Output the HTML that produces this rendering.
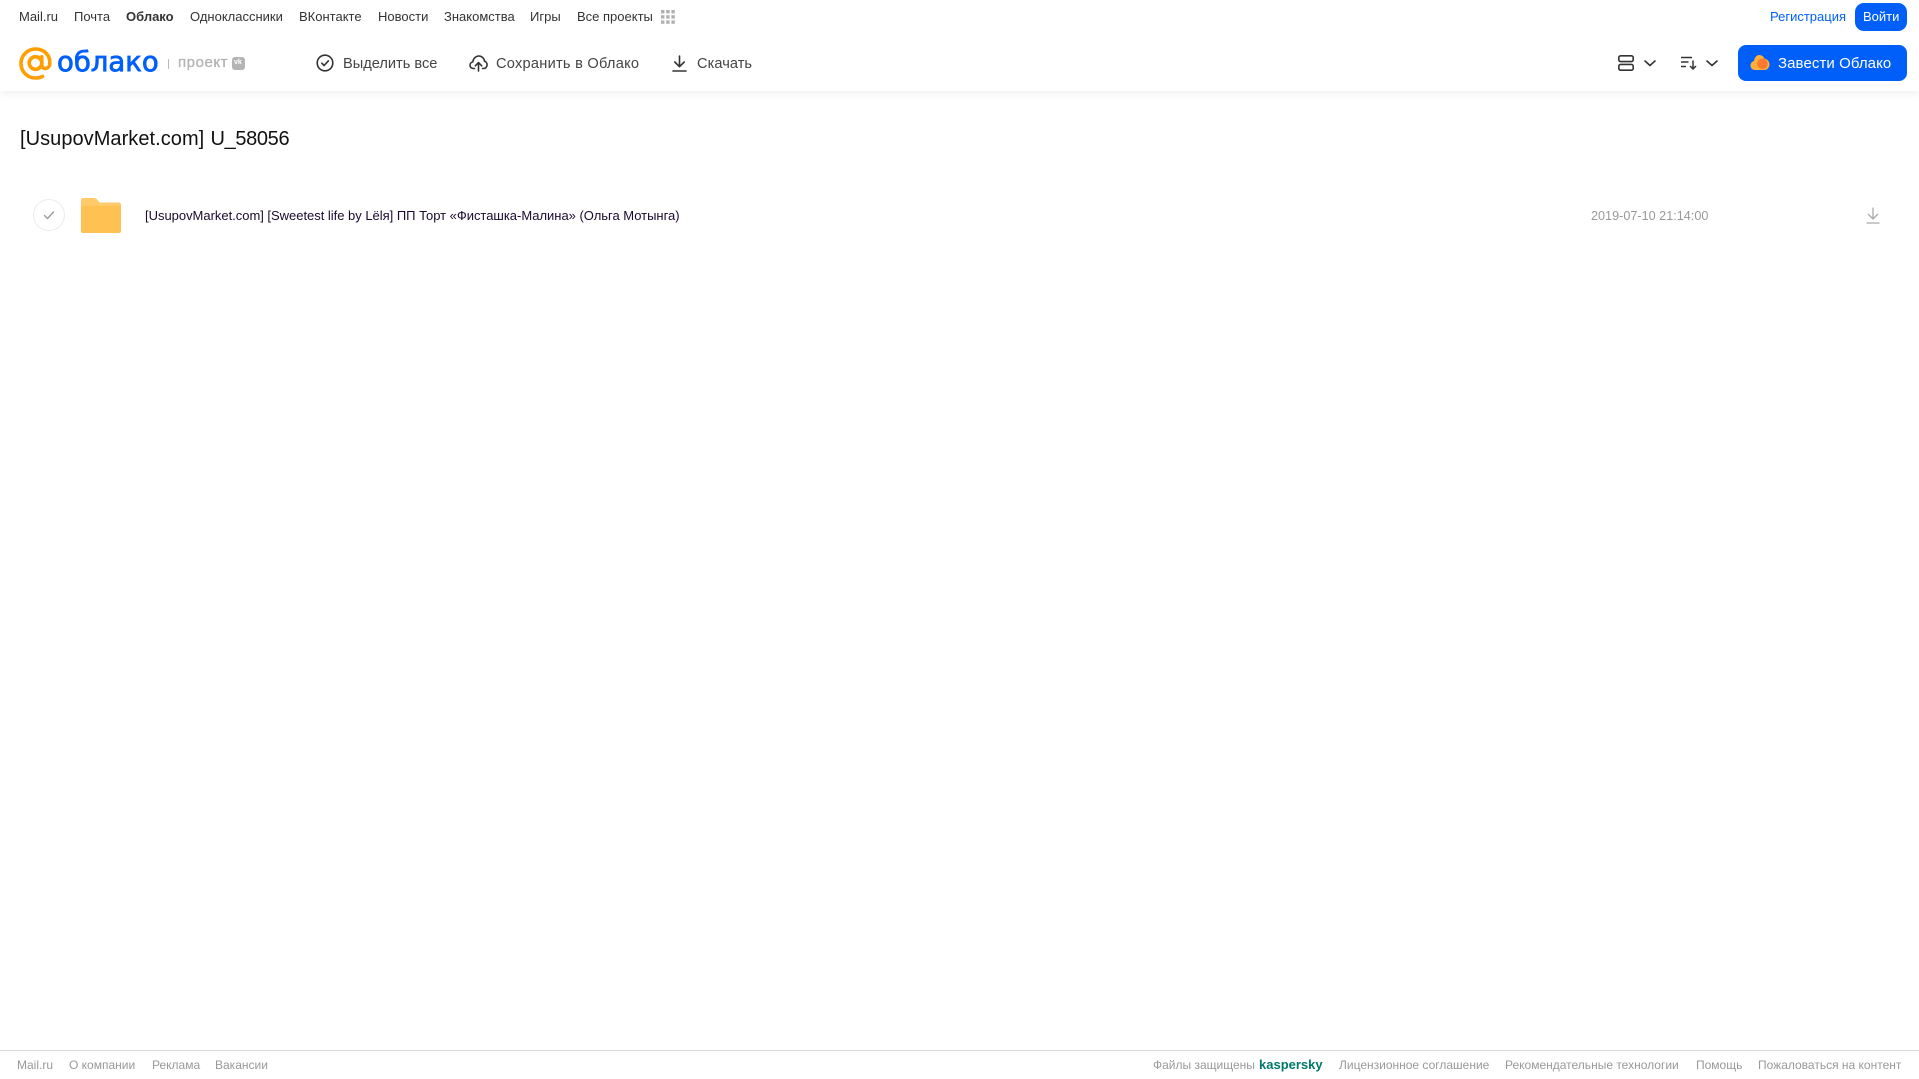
<!DOCTYPE html>
<html lang="ru">
<head>
<meta charset="utf-8">
<title>Облако</title>
<style>
html,body{margin:0;padding:0;background:#fff;width:1919px;height:1079px;overflow:hidden;font-family:"Liberation Sans",sans-serif}
.t{position:absolute;white-space:nowrap;line-height:20px;height:20px}
.n{font-size:13px;color:#333;top:7px}
.a{font-size:14.6px;color:#444;top:54px}
.f{font-size:12px;color:#999;top:1055px}
svg{position:absolute;overflow:visible}
#hd{position:absolute;left:0;top:0;width:1919px;height:91px;background:#fff;box-shadow:0 2px 8px rgba(0,0,0,.07)}
</style>
</head>
<body>
<div id="hd"></div>

<span class="t n" style="left:19px">Mail.ru</span>
<span class="t n" style="left:74px">Почта</span>
<span class="t n" style="left:126px;font-weight:bold">Облако</span>
<span class="t n" style="left:190px">Одноклассники</span>
<span class="t n" style="left:299px">ВКонтакте</span>
<span class="t n" style="left:378px">Новости</span>
<span class="t n" style="left:444px">Знакомства</span>
<span class="t n" style="left:530px">Игры</span>
<span class="t n" style="left:577px">Все проекты</span>
<svg style="left:661px;top:10px" width="14" height="14" fill="#b0b0b0"><rect x="0" y="0" width="3.4" height="3.4"/><rect x="5.2" y="0" width="3.4" height="3.4"/><rect x="10.4" y="0" width="3.4" height="3.4"/><rect x="0" y="5.2" width="3.4" height="3.4"/><rect x="5.2" y="5.2" width="3.4" height="3.4"/><rect x="10.4" y="5.2" width="3.4" height="3.4"/><rect x="0" y="10.4" width="3.4" height="3.4"/><rect x="5.2" y="10.4" width="3.4" height="3.4"/><rect x="10.4" y="10.4" width="3.4" height="3.4"/></svg>

<span class="t" style="left:1770px;top:7px;font-size:13px;color:#005ff9">Регистрация</span>
<div style="position:absolute;left:1855px;top:3px;width:52px;height:28px;border-radius:9px;background:#005ff9"></div>
<span class="t" style="left:1863px;top:7px;font-size:13px;color:#fff">Войти</span>

<svg style="left:19px;top:47px" width="33" height="33" viewBox="0 0 33 33" fill="none" stroke="#ff9e00" stroke-width="3.6"><circle cx="16.5" cy="16" r="6.3"/><path d="M22.8 9.8V18c0 5 7.6 5 8-1.5C31.2 8 25 2 16.5 2 8.5 2 2 8.500 2 16.500 2 24.800 8.500 31 16.500 31c2.800 0 5-.5 7-1.600" stroke-linecap="round"/></svg>
<span class="t" style="left:57px;top:44px;height:36px;line-height:36px;font-size:27.5px;color:#005ff9;font-family:'DejaVu Sans',sans-serif;-webkit-text-stroke:.8px #005ff9">облако</span>
<div style="position:absolute;left:168px;top:59px;width:1px;height:10px;background:#bbb"></div>
<span class="t" style="left:178px;top:53px;font-size:15px;color:#b4b4b4;letter-spacing:.55px;-webkit-text-stroke:.35px #b4b4b4">проект</span>
<div style="position:absolute;left:232px;top:57px;width:13px;height:13px;border-radius:3px;background:#b4b4b4"></div>
<span class="t" style="left:234px;top:53px;font-size:7px;font-weight:bold;color:#fff">vk</span>

<svg style="left:316px;top:54px" width="18" height="18" viewBox="0 0 18 18" fill="none" stroke="#333" stroke-width="1.600"><circle cx="9" cy="9" r="7.800"/><path d="M5.800 9.200l2.300 2.300 4.200-4.600" stroke-linecap="round" stroke-linejoin="round"/></svg>
<span class="t a" style="left:343px">Выделить все</span>
<svg style="left:469px;top:54px" width="19" height="18" viewBox="0 0 19 18" fill="none" stroke="#333" stroke-width="1.600" stroke-linecap="round" stroke-linejoin="round"><path d="M5.500 14.500H4.500C2.500 14.500 1 13 1 11.200c0-1.700 1.200-3 2.800-3.300C4.200 4.500 6.800 2 9.800 2c3 0 5.400 2.300 5.800 5.300 1.500.3 2.500 1.800 2.500 3.500 0 2-1.500 3.700-3.500 3.700h-1"/><path d="M9.500 17V9M6.300 11.800L9.500 8.600l3.200 3.200"/></svg>
<span class="t a" style="left:496px;letter-spacing:.25px">Сохранить в Облако</span>
<svg style="left:672px;top:55px" width="15" height="17" viewBox="0 0 15 17" fill="none" stroke="#333" stroke-width="1.600" stroke-linecap="round" stroke-linejoin="round"><path d="M7.500 1v10.500M2.800 7l4.700 4.700L12.200 7M1 16h13"/></svg>
<span class="t a" style="left:697px;letter-spacing:.05px">Скачать</span>

<svg style="left:1618px;top:55px" width="16" height="16" viewBox="0 0 16 16" fill="none" stroke="#333" stroke-width="1.600"><rect x=".8" y=".8" width="14.400" height="5.800" rx="1.800"/><rect x=".8" y="9.400" width="14.400" height="5.800" rx="1.800"/></svg>
<svg style="left:1644px;top:60px" width="12" height="7" viewBox="0 0 12 7" fill="none" stroke="#333" stroke-width="1.600" stroke-linecap="round" stroke-linejoin="round"><path d="M1 1l5 4.500L11 1"/></svg>
<svg style="left:1681px;top:56px" width="16" height="14" viewBox="0 0 16 14" fill="none" stroke="#333" stroke-width="1.400"><path d="M0 1.500h11M0 6h7.500M0 10.500h5"/><path d="M12 4.500V13M9 10l3 3 3-3" stroke-width="1.500"/></svg>
<svg style="left:1706px;top:60px" width="12" height="7" viewBox="0 0 12 7" fill="none" stroke="#333" stroke-width="1.600" stroke-linecap="round" stroke-linejoin="round"><path d="M1 1l5 4.500L11 1"/></svg>

<div style="position:absolute;left:1738px;top:45px;width:169px;height:36px;border-radius:8px;background:#005ff9"></div>
<svg style="left:1750px;top:54px" width="20" height="17" viewBox="0 0 20 17"><path d="M5 16C2 16 .5 13.800.5 11.500.5 9.200 2 7.500 4 7 4.500 3.500 6.500 1 9.200 1c2.500 0 4.500 1.500 5.300 3.800 2.800.2 5 2.600 5 5.700 0 3-2.300 5.500-5 5.500z" fill="#ffb03a"/><circle cx="12.500" cy="9.800" r="5.300" fill="#ff7a2e"/></svg>
<span class="t a" style="left:1778px;top:54px;color:#fff;font-size:15px;letter-spacing:.08px">Завести Облако</span>

<span class="t" style="left:20px;top:127px;height:24px;line-height:24px;font-size:20px;letter-spacing:.05px;color:#111">[UsupovMarket.com]</span>
<span class="t" style="left:210.5px;top:127px;height:24px;line-height:24px;font-size:20px;letter-spacing:-.35px;color:#111">U_58056</span>

<svg style="left:33px;top:199px" width="32" height="32" viewBox="0 0 32 32" fill="none"><circle cx="16" cy="16" r="15.500" stroke="#ececec"/><path d="M11.500 16.500l3 3 6-6.500" stroke="#999" stroke-width="1.300" stroke-linecap="round" stroke-linejoin="round"/></svg>
<svg style="left:81px;top:198px" width="40" height="35" viewBox="0 0 40 35"><path d="M2 0h11c1.500 0 2.500.8 3.500 2l2 2.500H38c1.100 0 2 .9 2 2V33c0 1.100-.9 2-2 2H2c-1.100 0-2-.9-2-2V2C0 .9.900 0 2 0z" fill="#ffcb6a"/><path d="M0 8h40v25c0 1.100-.9 2-2 2H2c-1.100 0-2-.9-2-2z" fill="#ffc152"/></svg>
<span class="t" style="left:145px;top:206px;font-size:13px;letter-spacing:-.02px;color:#1a0a2e">[UsupovMarket.com] [Sweetest life by Lëlя] ПП Торт «Фисташка-Малина» (Ольга Мотынга)</span>
<span class="t" style="left:1591px;top:206px;font-size:12.65px;color:#999">2019-07-10 21:14:00</span>
<svg style="left:1866px;top:207px" width="14" height="17" viewBox="0 0 14 17" fill="none" stroke="#aaa" stroke-width="1.300" stroke-linecap="round"><path d="M7 1v11M2.500 7.500L7 12l4.500-4.500M1 16h12"/></svg>

<div style="position:absolute;left:0;top:1050px;width:1919px;height:1px;background:#d8d8d8"></div>
<span class="t f" style="left:17px">Mail.ru</span>
<span class="t f" style="left:69px">О компании</span>
<span class="t f" style="left:152px">Реклама</span>
<span class="t f" style="left:215px">Вакансии</span>
<span class="t f" style="left:1153px">Файлы защищены</span>
<span class="t f" style="left:1259px;color:#00796b;font-weight:bold;font-size:13px">kaspersky</span>
<span class="t f" style="left:1339px">Лицензионное соглашение</span>
<span class="t f" style="left:1505px">Рекомендательные технологии</span>
<span class="t f" style="left:1696px">Помощь</span>
<span class="t f" style="left:1758px">Пожаловаться на контент</span>
</body>
</html>
